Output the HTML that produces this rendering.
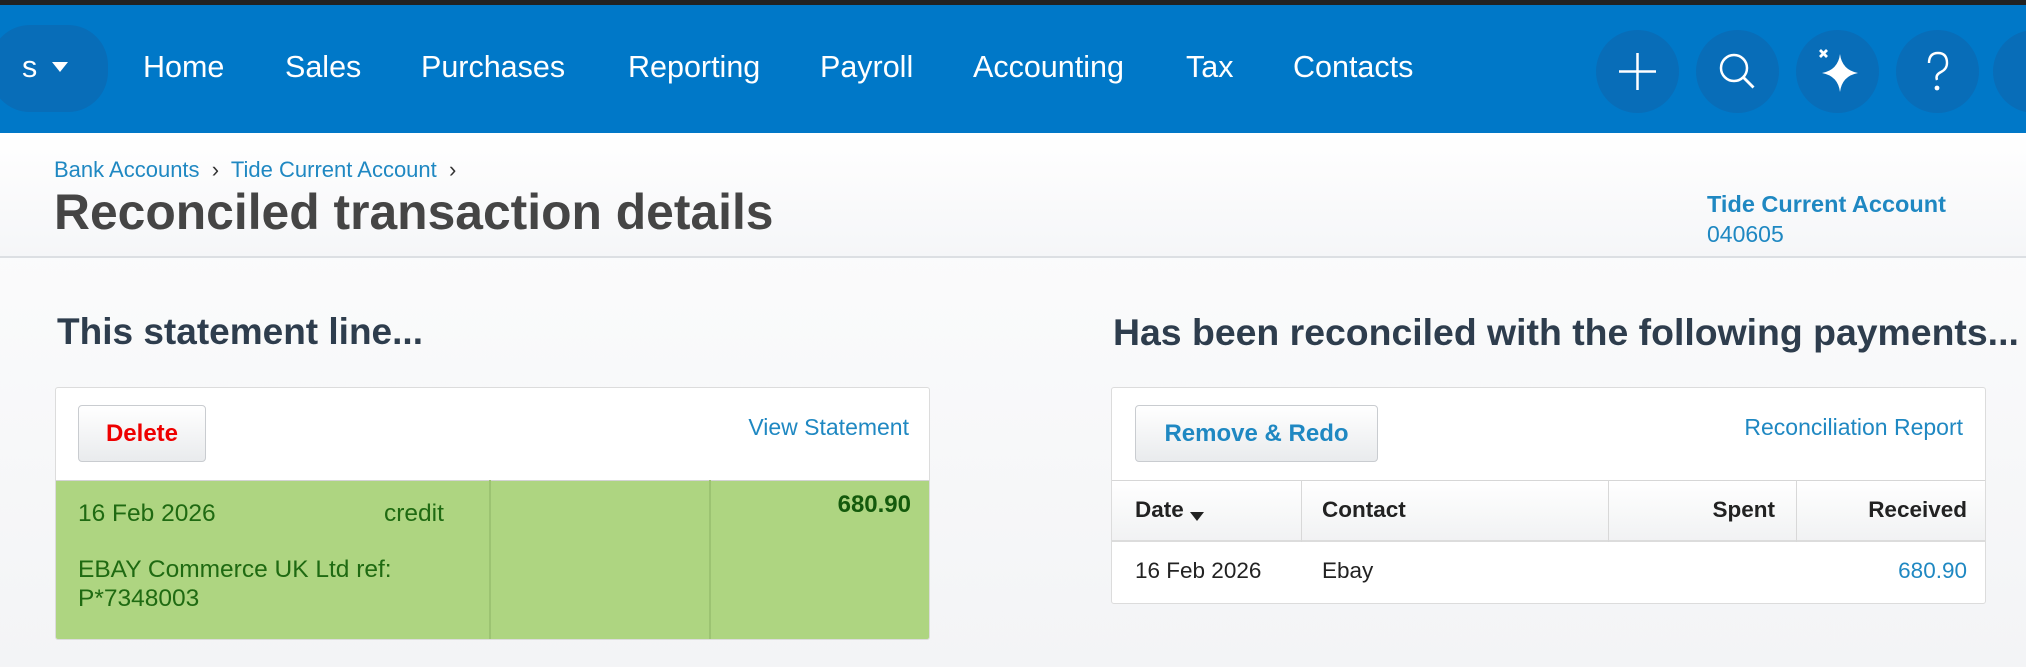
<!DOCTYPE html>
<html><head><meta charset="utf-8"><style>
*{margin:0;padding:0;box-sizing:border-box}
body{width:2026px;height:667px;overflow:hidden;font-family:"Liberation Sans",Arial,sans-serif;background:linear-gradient(#fff,#f3f4f6);position:relative}
.abs{position:absolute;white-space:nowrap}
.top{position:absolute;left:0;top:0;width:2026px;height:5px;background:#222}
.nav{position:absolute;left:0;top:5px;width:2026px;height:128px;background:#0078c8}
.nav .it{position:absolute;top:44px;font-size:30.5px;color:#fff;line-height:36px}
.circ{position:absolute;top:25px;width:83px;height:83px;border-radius:50%;background:#086db8}
.hdr{position:absolute;left:0;top:133px;width:2026px;height:125px;background:linear-gradient(#fff,#f5f6f8);border-bottom:2px solid #dcdfe3}
.link{color:#1f88c2}
.panel{position:absolute;background:#fff;border:1px solid #dcdcdc;border-radius:3px}
.btn{position:absolute;top:17px;height:57px;border:1px solid #c9ccd0;border-radius:4px;background:linear-gradient(#fff,#e9ebed);font-weight:bold;font-size:24px;text-align:center;line-height:55px}
.g{color:#1f6a12;font-size:24.5px}
.th{position:absolute;font-weight:bold;font-size:22.5px;color:#222;top:17px}
</style></head><body>
<div class="top"></div>
<div class="nav">
  <div style="position:absolute;left:-10px;top:20px;width:118px;height:87px;border-radius:40px;background:#086db8"></div>
  <div class="it" style="left:22px">s</div>
  <svg class="abs" style="left:51px;top:56px" width="18" height="12"><path d="M1 1h16L9 11z" fill="#fff"/></svg>
  <div class="it" style="left:143px">Home</div>
  <div class="it" style="left:285px">Sales</div>
  <div class="it" style="left:421px">Purchases</div>
  <div class="it" style="left:628px">Reporting</div>
  <div class="it" style="left:820px">Payroll</div>
  <div class="it" style="left:973px">Accounting</div>
  <div class="it" style="left:1186px">Tax</div>
  <div class="it" style="left:1293px">Contacts</div>
  <div class="circ" style="left:1596px"><svg width="83" height="83"><path d="M41.5 23v37M23 41.5h37" stroke="#fff" stroke-width="2.5"/></svg></div>
  <div class="circ" style="left:1696px"><svg width="83" height="83"><circle cx="38" cy="38" r="13" fill="none" stroke="#fff" stroke-width="2.5"/><path d="M47.5 47.5l10 10" stroke="#fff" stroke-width="2.8"/></svg></div>
  <div class="circ" style="left:1796px"><svg width="83" height="83"><path d="M44 24Q46 40 62 43Q46 46 44 62Q42 46 26 43Q42 40 44 24z" fill="#fff"/><path d="M24 20l7 7M31 20l-7 7" stroke="#fff" stroke-width="2.8"/></svg></div>
  <div class="circ" style="left:1896px"><svg width="83" height="83"><path d="M33 33q0-10 9-10t9 10q0 6-6 9t-4 8" fill="none" stroke="#fff" stroke-width="2.4"/><circle cx="41" cy="58" r="2.4" fill="#fff"/></svg></div>
  <div class="circ" style="left:1993px"></div>
</div>
<div class="hdr"></div>
<div class="abs link" style="left:54px;top:157px;font-size:22px">Bank Accounts&nbsp; <span style="color:#333">›</span>&nbsp; Tide Current Account&nbsp; <span style="color:#333">›</span></div>
<div class="abs" style="left:54px;top:183px;font-size:49.8px;font-weight:bold;color:#454545">Reconciled transaction details</div>
<div class="abs link" style="left:1707px;top:191px;font-size:23.5px;font-weight:bold">Tide Current Account</div>
<div class="abs link" style="left:1707px;top:221px;font-size:23px">040605</div>

<div class="abs" style="left:57px;top:311px;font-size:37px;font-weight:bold;color:#2e3d4d">This statement line...</div>
<div class="abs" style="left:1113px;top:311px;font-size:37.4px;font-weight:bold;color:#2e3d4d">Has been reconciled with the following payments...</div>

<div class="panel" style="left:55px;top:387px;width:875px;height:253px;overflow:hidden">
  <div class="btn" style="left:22px;width:128px;color:#e00">Delete</div>
  <div class="abs link" style="right:20px;top:26px;font-size:23px">View Statement</div>
  <div style="position:absolute;left:0;top:92px;width:875px;height:161px;background:#aed581;border-top:1px solid #d3d3d3"></div>
  <div style="position:absolute;left:433px;top:92px;width:2px;height:161px;background:#9cc372"></div>
  <div style="position:absolute;left:653px;top:92px;width:2px;height:161px;background:#9cc372"></div>
  <div class="abs g" style="left:22px;top:112px">16 Feb 2026</div>
  <div class="abs g" style="left:328px;top:112px">credit</div>
  <div class="abs g" style="left:22px;top:167px;line-height:29px">EBAY Commerce UK Ltd ref:<br>P*7348003</div>
  <div class="abs g" style="right:18px;top:103px;font-weight:bold;color:#145a0c;font-size:24px">680.90</div>
</div>

<div class="panel" style="left:1111px;top:387px;width:875px;height:217px;overflow:hidden">
  <div class="btn" style="left:23px;width:243px;color:#1f88c2">Remove &amp; Redo</div>
  <div class="abs link" style="right:22px;top:26px;font-size:23px">Reconciliation Report</div>
  <div style="position:absolute;left:0;top:92px;width:875px;height:62px;background:linear-gradient(#fff,#f1f2f3);border-top:1px solid #d6d6d6;border-bottom:2px solid #dcdcdc"></div>
  <div style="position:absolute;left:189px;top:92px;width:1px;height:62px;background:#d8d8d8"></div>
  <div style="position:absolute;left:496px;top:92px;width:1px;height:62px;background:#d8d8d8"></div>
  <div style="position:absolute;left:684px;top:92px;width:1px;height:62px;background:#d8d8d8"></div>
  <div style="position:absolute;left:0;top:92px;width:875px;height:62px">
    <div class="th link" style="left:23px">Date <svg width="14" height="9" style="vertical-align:-4px"><path d="M0 0h14L7 9z" fill="#222"/></svg></div>
    <div class="th" style="left:210px">Contact</div>
    <div class="th" style="right:212px">Spent</div>
    <div class="th" style="right:20px">Received</div>
  </div>
  <div class="abs" style="left:23px;top:170px;font-size:22.5px;color:#222">16 Feb 2026</div>
  <div class="abs" style="left:210px;top:170px;font-size:22.5px;color:#222">Ebay</div>
  <div class="abs link" style="right:18px;top:170px;font-size:22.5px">680.90</div>
</div>
</body></html>
